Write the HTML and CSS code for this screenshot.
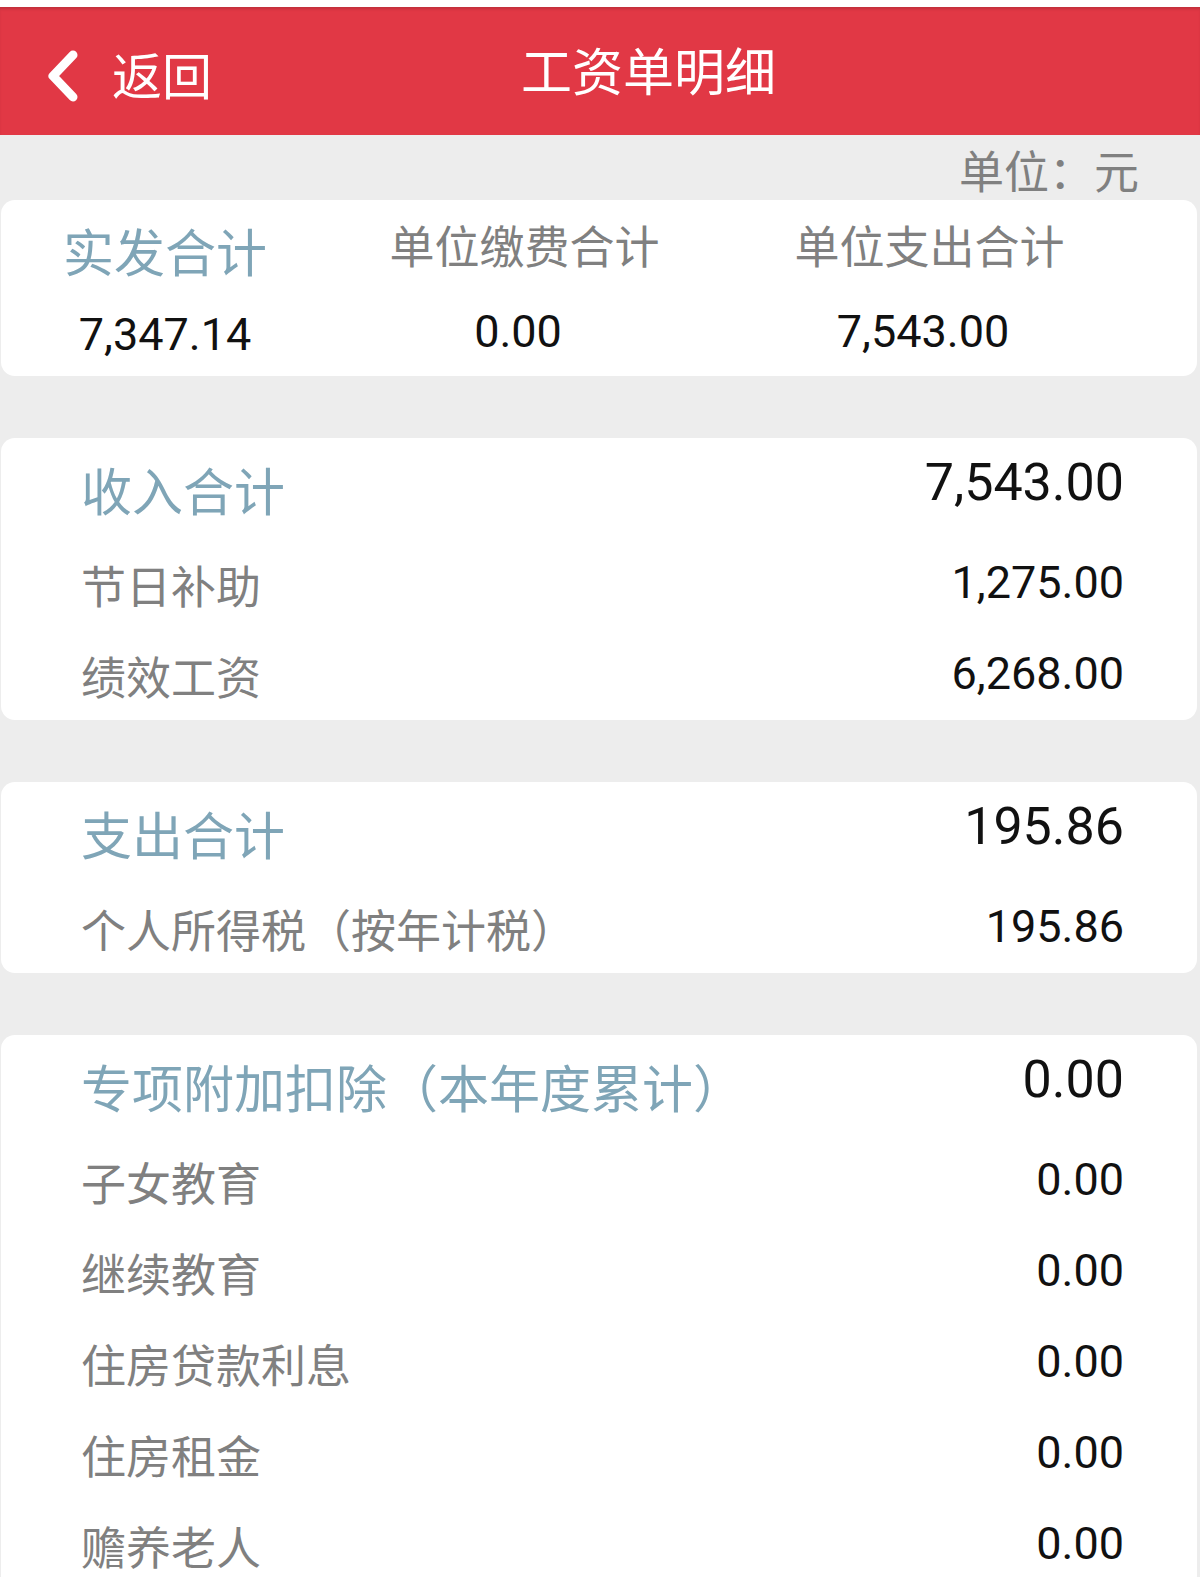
FILE: index.html
```html
<!DOCTYPE html>
<html lang="zh-CN">
<head>
<meta charset="utf-8">
<title>工资单明细</title>
<link rel="stylesheet" href="styles.css">
</head>
<body>
<div class="statusbar"></div>
<header class="topbar">
  <div class="back">
    <svg class="back-icon" viewBox="0 0 40 60" aria-hidden="true"><polyline points="29,9 9,30 29,51" fill="none" stroke="#fff" stroke-width="9" stroke-linecap="round" stroke-linejoin="round"/></svg>
    <span class="back-text">返回</span>
  </div>
  <h1 class="title">工资单明细</h1>
</header>
<div class="unit">单位：元</div>

<section class="card summary">
  <div class="sum-col main"><div class="sum-label">实发合计</div><div class="sum-val">7,347.14</div></div>
  <div class="sum-col"><div class="sum-label">单位缴费合计</div><div class="sum-val">0.00</div></div>
  <div class="sum-col"><div class="sum-label">单位支出合计</div><div class="sum-val">7,543.00</div></div>
</section>

<section class="card">
  <div class="row head"><span class="label">收入合计</span><span class="val">7,543.00</span></div>
  <div class="row"><span class="label">节日补助</span><span class="val">1,275.00</span></div>
  <div class="row"><span class="label">绩效工资</span><span class="val">6,268.00</span></div>
</section>

<section class="card">
  <div class="row head"><span class="label">支出合计</span><span class="val">195.86</span></div>
  <div class="row"><span class="label">个人所得税（按年计税）</span><span class="val">195.86</span></div>
</section>

<section class="card">
  <div class="row head"><span class="label">专项附加扣除（本年度累计）</span><span class="val">0.00</span></div>
  <div class="row"><span class="label">子女教育</span><span class="val">0.00</span></div>
  <div class="row"><span class="label">继续教育</span><span class="val">0.00</span></div>
  <div class="row"><span class="label">住房贷款利息</span><span class="val">0.00</span></div>
  <div class="row"><span class="label">住房租金</span><span class="val">0.00</span></div>
  <div class="row"><span class="label">赡养老人</span><span class="val">0.00</span></div>
</section>
</body>
</html>
```

FILE: styles.css
```css
html, body {
  margin: 0;
  padding: 0;
}
body {
  width: 1200px;
  background: #ededed;
  font-family: Roboto, "Noto Sans CJK SC", sans-serif;
  overflow: hidden;
}

.statusbar {
  height: 7px;
  background: #ffffff;
}

.topbar {
  height: 128px;
  background: #e13845;
  display: flex;
  align-items: center;
  padding-left: 44px;
  box-shadow: inset 0 3px 3px -1px rgba(0, 0, 0, 0.14);
}
.back {
  display: flex;
  align-items: center;
  margin-top: 10px;
}
.back-icon {
  display: block;
  width: 40px;
  height: 60px;
}
.back-text {
  margin-left: 28px;
  margin-bottom: 6px;
  font-family: "Noto Sans CJK SC", sans-serif;
  font-size: 50px;
  line-height: 50px;
  color: #ffffff;
}
.title {
  margin: 0 0 4px 309px;
  font-family: "Noto Sans CJK SC", sans-serif;
  font-size: 51px;
  line-height: 51px;
  font-weight: 400;
  color: #ffffff;
}

.unit {
  text-align: right;
  padding: 12px 61px 8px 0;
  font-family: "Noto Sans CJK SC", sans-serif;
  font-size: 45px;
  line-height: 45px;
  color: #808080;
}

.card {
  background: #ffffff;
  border-radius: 14px;
  margin: 62px 3px 0 1px;
  padding: 0 73px 23px 80px;
}

.summary {
  margin-top: 0;
  padding: 22px 0 19px 0;
  display: grid;
  grid-template-columns: 328px 384px 426px;
}
.sum-col {
  display: flex;
  flex-direction: column;
  align-items: center;
  gap: 42px;
}
.sum-col.main {
  gap: 36px;
}
.sum-label {
  font-family: "Noto Sans CJK SC", sans-serif;
  font-size: 45px;
  line-height: 45px;
  color: #808080;
  white-space: nowrap;
  margin-left: 7px;
}
.sum-col.main .sum-label {
  margin-top: 3px;
  margin-left: 0;
  font-size: 51px;
  line-height: 51px;
  color: #7fa5b7;
}
.sum-val {
  font-family: Roboto, sans-serif;
  font-size: 45px;
  line-height: 45px;
  color: #111111;
  margin-right: 6px;
}
.sum-col.main .sum-val {
  margin-right: 0;
}

.row {
  display: flex;
  justify-content: space-between;
  align-items: flex-start;
  padding-top: 46px;
}
.row.head {
  padding-top: 19px;
}
.label {
  font-family: "Noto Sans CJK SC", sans-serif;
  font-size: 45px;
  line-height: 45px;
  color: #808080;
  white-space: nowrap;
  margin-top: 1px;
  margin-bottom: -1px;
}
.head .label {
  margin-top: 7px;
  margin-bottom: 0;
  font-size: 51px;
  line-height: 51px;
  color: #7fa5b7;
}
.val {
  font-family: Roboto, sans-serif;
  font-size: 45px;
  line-height: 45px;
  color: #111111;
  margin-top: -1px;
  margin-bottom: 1px;
}
.head .val {
  margin-top: 0;
  margin-bottom: 0;
  font-size: 52px;
  line-height: 52px;
}
```
